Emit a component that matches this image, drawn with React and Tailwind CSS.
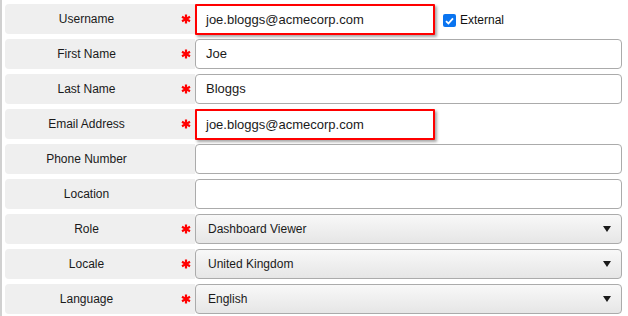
import React from "react";

const rows = [
  { label: "Username", req: true, type: "text", value: "joe.bloggs@acmecorp.com", error: true, external: true },
  { label: "First Name", req: true, type: "text", value: "Joe" },
  { label: "Last Name", req: true, type: "text", value: "Bloggs" },
  { label: "Email Address", req: true, type: "text", value: "joe.bloggs@acmecorp.com", error: true },
  { label: "Phone Number", req: false, type: "text", value: "" },
  { label: "Location", req: false, type: "text", value: "" },
  { label: "Role", req: true, type: "select", value: "Dashboard Viewer" },
  { label: "Locale", req: true, type: "select", value: "United Kingdom" },
  { label: "Language", req: true, type: "select", value: "English" },
];

function Asterisk() {
  return (
    <svg width="10" height="10" viewBox="0 0 10 10" className="block">
      <g stroke="#ff0000" strokeWidth="2.2" strokeLinecap="butt">
        <line x1="5" y1="0.5" x2="5" y2="9.5" />
        <line x1="1" y1="2.8" x2="9" y2="7.2" />
        <line x1="1" y1="7.2" x2="9" y2="2.8" />
      </g>
    </svg>
  );
}

function Field({ row }) {
  if (row.type === "select") {
    return (
      <div className="flex h-[30px] w-[427px] items-center justify-between rounded-[4px] border border-[#ababab] bg-gradient-to-b from-[#f8f8f8] to-[#e6e6e6] pl-[12px] pr-[10px] text-[12px] text-[#1a1a1a]">
        <span>{row.value}</span>
        <svg width="8" height="6" viewBox="0 0 8 6" className="block">
          <path d="M0 0 H8 L4 6 Z" fill="#1a1a1a" />
        </svg>
      </div>
    );
  }
  if (row.error) {
    return (
      <div className="flex items-start">
        <div className="flex h-[31px] w-[240px] items-center rounded-[1px] border-2 border-[#ff0000] bg-white pl-[9px] text-[13px] text-[#1a1a1a] shadow-[2px_2px_3px_rgba(0,0,0,0.35)]">
          {row.value}
        </div>
        {row.external && (
          <div className="ml-[8px] mt-[9px] flex items-start gap-[4px]">
            <div className="mt-[1px] flex h-[13px] w-[13px] items-center justify-center rounded-[2px] bg-[#0a74f0]">
              <svg width="9" height="8" viewBox="0 0 9 8" className="block">
                <path d="M1 4.2 L3.4 6.5 L8 1.3" fill="none" stroke="white" strokeWidth="1.8" />
              </svg>
            </div>
            <span className="text-[12px] leading-[14px] text-[#111]">External</span>
          </div>
        )}
      </div>
    );
  }
  return (
    <div className="flex h-[30px] w-[427px] items-center rounded-[4px] border border-[#ababab] bg-white pl-[10px] text-[13px] text-[#1a1a1a]">
      {row.value}
    </div>
  );
}

export default function App() {
  return (
    <div
      className="h-[316px] w-[628px] bg-white"
      style={{ fontFamily: '"Liberation Sans", Arial, sans-serif' }}
    >
      <div className="flex h-full flex-col gap-[5px] border-l-2 border-[#d0d0d0] pl-[3px] pt-[4px]">
        {rows.map((row) => (
          <div key={row.label} className="flex h-[30px] items-stretch">
            <div className="flex w-[190px] items-center rounded-l-[4px] bg-[#efefef]">
              <div className="w-[163px] text-center text-[12px] text-[#1a1a1a]">{row.label}</div>
              <div className="flex flex-1 justify-end pr-[4px]">{row.req && <Asterisk />}</div>
            </div>
            <Field row={row} />
          </div>
        ))}
      </div>
    </div>
  );
}
